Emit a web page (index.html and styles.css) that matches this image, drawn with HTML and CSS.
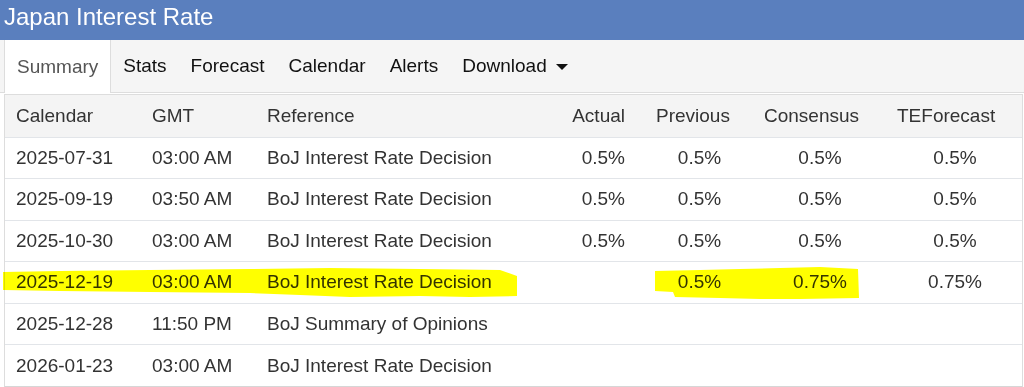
FILE: index.html
```html
<!DOCTYPE html>
<html>
<head>
<meta charset="utf-8">
<link rel="stylesheet" href="styles.css">
</head>
<body>
<div class="page">
  <div class="titlebar">Japan Interest Rate</div>
  <nav class="tabs">
    <span class="tab active">Summary</span>
    <span class="tab">Stats</span>
    <span class="tab">Forecast</span>
    <span class="tab">Calendar</span>
    <span class="tab">Alerts</span>
    <span class="tab">Download<span class="caret"></span></span>
  </nav>
  <div class="tablewrap">
    <table class="cal">
      <colgroup>
        <col class="w1"><col class="w2"><col class="w3"><col class="w4"><col class="w5"><col class="w6"><col class="w7">
      </colgroup>
      <thead>
        <tr>
          <th class="first">Calendar</th><th>GMT</th><th>Reference</th><th class="act">Actual</th><th>Previous</th><th>Consensus</th><th>TEForecast</th>
        </tr>
      </thead>
      <tbody>
        <tr><td class="first">2025-07-31</td><td>03:00 AM</td><td>BoJ Interest Rate Decision</td><td class="act">0.5%</td><td class="num">0.5%</td><td class="num">0.5%</td><td class="num">0.5%</td></tr>
        <tr><td class="first">2025-09-19</td><td>03:50 AM</td><td>BoJ Interest Rate Decision</td><td class="act">0.5%</td><td class="num">0.5%</td><td class="num">0.5%</td><td class="num">0.5%</td></tr>
        <tr><td class="first">2025-10-30</td><td>03:00 AM</td><td>BoJ Interest Rate Decision</td><td class="act">0.5%</td><td class="num">0.5%</td><td class="num">0.5%</td><td class="num">0.5%</td></tr>
        <tr><td class="first">2025-12-19</td><td>03:00 AM</td><td>BoJ Interest Rate Decision</td><td class="act"></td><td class="num">0.5%</td><td class="num">0.75%</td><td class="num">0.75%</td></tr>
        <tr><td class="first">2025-12-28</td><td>11:50 PM</td><td>BoJ Summary of Opinions</td><td class="act"></td><td class="num"></td><td class="num"></td><td class="num"></td></tr>
        <tr><td class="first">2026-01-23</td><td>03:00 AM</td><td>BoJ Interest Rate Decision</td><td class="act"></td><td class="num"></td><td class="num"></td><td class="num"></td></tr>
      </tbody>
    </table>
  </div>
  <svg class="marker" width="1024" height="387" viewBox="0 0 1024 387">
    <path fill="#ffff00" d="M3 272 L60 271 L150 270 L250 269 L330 268 L420 269 L500 270 L517 276 L517 296 L470 297 L420 296 L350 297 L300 295 L250 293 L150 292 L60 291 L3 290 Z"/>
    <path fill="#ffff00" d="M655 271 L700 270 L740 269 L780 268 L820 267 L858 269 L859 298 L800 299 L760 299 L720 298 L675 297 L673 292 L655 291 Z"/>
  </svg>
</div>
</body>
</html>
```
FILE: styles.css
```css
html, body {
  margin: 0;
  padding: 0;
  background: #ffffff;
  overflow: hidden;
}

.page {
  position: relative;
  width: 1024px;
  height: 387px;
  font-family: "Liberation Sans", Arial, sans-serif;
  color: #333333;
}

.titlebar {
  height: 40px;
  box-sizing: border-box;
  padding: 3px 0 0 4px;
  background: #5a7fbe;
  color: #ffffff;
  font-size: 24px;
  line-height: 28px;
}

.tabs {
  display: flex;
  height: 52px;
  padding-left: 4px;
  background: #f5f5f5;
  border-bottom: 1px solid #dddddd;
  font-size: 19px;
  line-height: 52px;
}

.tab {
  display: flex;
  align-items: center;
  padding: 0 12px;
  color: #111111;
}

.tab.active {
  background: #ffffff;
  color: #555555;
  border-left: 1px solid #dddddd;
  border-right: 1px solid #dddddd;
  margin-bottom: -1px;
}

.caret {
  display: inline-block;
  width: 0;
  height: 0;
  margin-left: 9px;
  margin-top: 1px;
  border-top: 6px solid #111111;
  border-left: 6px solid transparent;
  border-right: 6px solid transparent;
}

.tablewrap {
  margin: 1px 1px 0 4px;
  border: 1px solid #dddddd;
  border-bottom-color: #d6d6d6;
}

.cal {
  width: 100%;
  border-collapse: collapse;
  table-layout: fixed;
  font-size: 19px;
  color: #333333;
}

.w1 { width: 135px; }
.w2 { width: 115px; }
.w3 { width: 285px; }
.w4 { width: 104px; }
.w5 { width: 108px; }
.w6 { width: 133px; }
.w7 { width: 137px; }

.cal thead tr {
  height: 42px;
  background: #f4f4f4;
}

.cal th {
  font-weight: normal;
  text-align: left;
  padding: 0 12px;
  white-space: nowrap;
  border-bottom: 1px solid #e2e5e9;
}

.cal tbody tr {
  height: 41.5px;
}

.cal td {
  padding: 0 12px;
  white-space: nowrap;
  border-bottom: 1px solid #e2e5e9;
}

.cal tbody tr:last-child td {
  border-bottom: none;
}

.cal .first {
  padding-left: 11px;
}

.cal .act {
  text-align: right;
  padding-right: 19px;
}

.cal .num {
  text-align: center;
  padding: 0 0 0 3px;
}

.marker {
  position: absolute;
  left: 0;
  top: 0;
  pointer-events: none;
  mix-blend-mode: multiply;
}
```
